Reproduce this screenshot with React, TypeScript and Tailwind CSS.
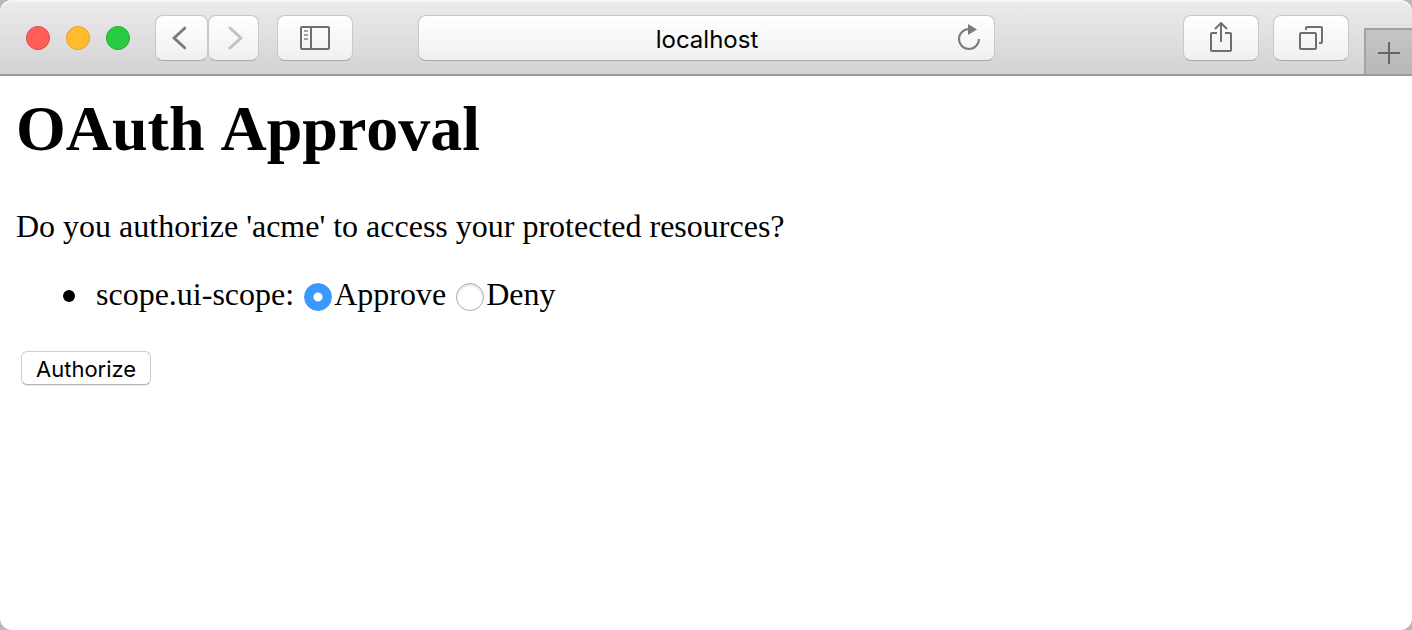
import { useState } from "react";
import type { ReactNode } from "react";

const buttonBase =
  "flex h-[46px] items-center justify-center rounded-lg border border-[#c9c7ca] border-b-[#a9a7aa] bg-linear-to-b from-white to-[#f1f0f1]";

function ToolbarButton({ label, width, children }: { label: string; width: string; children: ReactNode }) {
  return (
    <button type="button" aria-label={label} className={`${buttonBase} ${width}`}>
      {children}
    </button>
  );
}

function Toolbar() {
  return (
    <header className="grid h-[76px] grid-cols-[1fr_minmax(0,577px)_1fr] rounded-t-xl border-b-2 border-[#9c9a9d] bg-linear-to-b from-[#edebee] to-[#d4d2d5] pt-[2px] shadow-[inset_0_2px_0_#f6f5f7]">
      <div className="flex items-center pl-[26px]">
        <div className="flex gap-4">
          <button type="button" aria-label="Close" className="size-6 rounded-full border border-[#e2463f] bg-[#ff5f57]" />
          <button type="button" aria-label="Minimize" className="size-6 rounded-full border border-[#dfa023] bg-[#ffbd2e]" />
          <button type="button" aria-label="Zoom" className="size-6 rounded-full border border-[#1dad2b] bg-[#28cc41]" />
        </div>
        <div className="ml-[25px] flex">
          <ToolbarButton label="Back" width="w-[53px]">
            <svg width="16" height="26" viewBox="0 0 16 26" fill="none" stroke="#7b7b7b" strokeWidth="3" strokeLinecap="round" strokeLinejoin="round" className="mr-2">
              <path d="M15 3 4 13 15 23" />
            </svg>
          </ToolbarButton>
          <ToolbarButton label="Forward" width="w-[51px]">
            <svg width="16" height="26" viewBox="0 0 16 26" fill="none" stroke="#c2c2c2" strokeWidth="3" strokeLinecap="round" strokeLinejoin="round" className="ml-1">
              <path d="M2 3 13 13 2 23" />
            </svg>
          </ToolbarButton>
        </div>
        <div className="ml-[18px]">
          <ToolbarButton label="Show sidebar" width="w-[76px]">
            <svg width="30" height="24" viewBox="0 0 30 24" fill="none" stroke="#6f6f6f" strokeWidth="2">
              <rect x="1" y="1" width="28" height="22" rx="1" />
              <path d="M11 1V23" />
              <path d="M4 5H8M4 9H8M4 13H8" stroke="#a2a2a2" />
            </svg>
          </ToolbarButton>
        </div>
      </div>
      <div className="flex items-center">
        <div className={`${buttonBase} w-full pr-[13px] pl-[39px]`}>
          <input
            aria-label="Address"
            defaultValue="localhost"
            className="min-w-0 flex-1 bg-transparent pt-1 text-center font-['Inter',sans-serif] text-2xl text-black outline-none"
          />
          <button type="button" aria-label="Reload">
            <svg width="24" height="28" viewBox="0 0 24 28" fill="none">
              <path d="M12 5A10 10 0 1 0 22 15" stroke="#7b7b7b" strokeWidth="2" />
              <path d="M11 0 20 5.500 11 11Z" fill="#7b7b7b" />
            </svg>
          </button>
        </div>
      </div>
      <div className="flex items-center justify-end">
        <div className="flex gap-[14px]">
          <ToolbarButton label="Share" width="w-[76px]">
            <svg width="24" height="32" viewBox="0 0 24 32" fill="none" stroke="#6f6f6f" strokeWidth="2">
              <path d="M8 11H3Q2 11 2 12V28Q2 29 3 29H21Q22 29 22 28V12Q22 11 21 11H16" />
              <path d="M12 20V1M6 7 12 1 18 7" />
            </svg>
          </ToolbarButton>
          <ToolbarButton label="Show all tabs" width="w-[76px]">
            <svg width="24" height="24" viewBox="0 0 24 24" fill="none" stroke="#6f6f6f" strokeWidth="2">
              <rect x="1" y="7" width="16" height="16" rx="1" />
              <path d="M7 4V2Q7 1 8 1H22Q23 1 23 2V16Q23 17 22 17H20" />
            </svg>
          </ToolbarButton>
        </div>
        <button
          type="button"
          aria-label="New tab"
          className="ml-[15px] flex h-[46px] w-12 items-center justify-center self-end border-t-2 border-l-2 border-[#a3a1a4] bg-linear-to-b from-[#c6c4c7] to-[#b9b7ba] pt-[2px]"
        >
          <svg width="22" height="22" viewBox="0 0 22 22" stroke="#666" strokeWidth="2">
            <path d="M11 0V22M0 11H22" />
          </svg>
        </button>
      </div>
    </header>
  );
}

function ScopeRadio({ value, label, selected, onSelect }: { value: string; label: string; selected: string; onSelect: (value: string) => void }) {
  return (
    <label className="flex items-center gap-[2px]">
      <input
        type="radio"
        name="scope.ui-scope"
        value={value}
        checked={selected === value}
        onChange={() => onSelect(value)}
        className="mt-[6px] size-7 appearance-none rounded-full border border-[#adadad] bg-white shadow-[inset_0_2px_2px_#e4e4e4] checked:border-[#3b99fc] checked:bg-[radial-gradient(circle,white_4px,#3b99fc_5px)] checked:shadow-none"
      />
      {label}
    </label>
  );
}

export default function App() {
  const [choice, setChoice] = useState("true");
  return (
    <div className="min-h-screen bg-[#b8b8b8]">
      <div className="flex min-h-screen flex-col rounded-xl bg-white text-black">
        <Toolbar />
        <main className="px-4 pt-[17px] font-['Liberation_Serif',serif] text-[32px] leading-9">
          <h1 className="text-[64px] leading-[72px] font-bold [font-kerning:none]">OAuth Approval</h1>
          <p className="mt-[43px]">Do you authorize 'acme' to access your protected resources?</p>
          <form onSubmit={(event) => event.preventDefault()}>
            <ul className="mt-8">
              <li className="flex flex-wrap items-center pl-[47px]">
                <span aria-hidden="true" className="mt-1 mr-[21px] size-3 rounded-full bg-black" />
                <span className="mr-[10px]">scope.ui-scope:</span>
                <div className="flex gap-[10px]">
                  <ScopeRadio value="true" label="Approve" selected={choice} onSelect={setChoice} />
                  <ScopeRadio value="false" label="Deny" selected={choice} onSelect={setChoice} />
                </div>
              </li>
            </ul>
            <button
              type="submit"
              className="mt-[39px] ml-[5px] flex h-[34px] items-center rounded-md border border-[#cfcfcf] border-b-[#b5b5b5] bg-white px-[14px] pt-[2px] font-['Inter',sans-serif] text-[22px] shadow-[0_1px_0_#e8e8e8]"
            >
              Authorize
            </button>
          </form>
        </main>
      </div>
    </div>
  );
}
